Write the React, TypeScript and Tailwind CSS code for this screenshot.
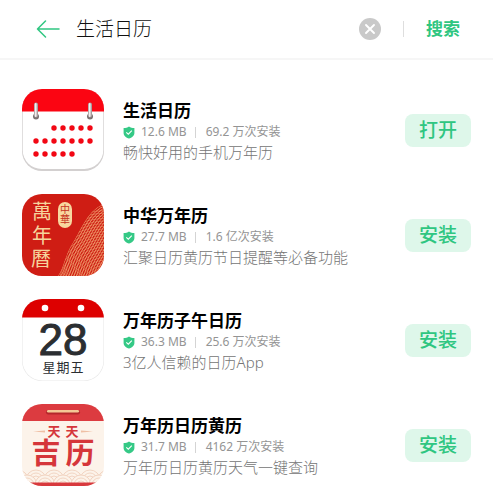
import { useState, type ReactNode } from "react";

interface AppItem {
  name: string;
  size: string;
  installs: string;
  description: string;
  action: string;
  icon: ReactNode;
}

function IconFrame({ id, children }: { id: string; children: ReactNode }) {
  return (
    <svg viewBox="0 0 82 82" className="size-[82px] shrink-0" aria-hidden="true">
      <defs>
        <clipPath id={id}>
          <rect width="82" height="82" rx="20" />
        </clipPath>
      </defs>
      <g clipPath={`url(#${id})`}>{children}</g>
    </svg>
  );
}

const dotRows = [
  { y: 39, xs: [32, 41, 50, 59, 68] },
  { y: 52, xs: [14, 23, 32, 41, 50, 59, 68] },
  { y: 65, xs: [14, 23, 32, 41, 50] },
];

function DotCalendarIcon() {
  return (
    <IconFrame id="clip-dots">
      <rect width="82" height="82" fill="#d3d0d0" />
      <rect x="0.7" y="0" width="80.6" height="80" rx="19" fill="#fff" />
      <rect width="82" height="22.5" fill="#fb0512" />
      {dotRows.map((row) =>
        row.xs.map((x) => <circle key={`${x}-${row.y}`} cx={x} cy={row.y} r="2.7" fill="#f20714" />)
      )}
      {[14, 68].map((x) => (
        <g key={x}>
          <circle cx={x} cy="27.5" r="3" fill="#7b7272" />
          <rect x={x - 2} y="13.5" width="4" height="15" rx="2" fill="#a79c9c" />
          <rect x={x - 1.2} y="14" width="1.8" height="14" rx="0.9" fill="#f3efef" />
        </g>
      ))}
    </IconFrame>
  );
}

function ChineseAlmanacIcon() {
  return (
    <IconFrame id="clip-almanac">
      <defs>
        <clipPath id="clip-hill">
          <path d="M36 82C42 74 43 60 52 47C60 34 66 16 82 10V82Z" />
        </clipPath>
      </defs>
      <rect width="82" height="82" fill="#cf1d14" />
      <g clipPath="url(#clip-hill)" fill="none" stroke="#efa06e" strokeWidth="0.9">
        {Array.from({ length: 26 }, (_, i) => (
          <path
            key={i}
            d="M30 94L36 82C42 74 43 60 52 47C60 34 66 16 82 10"
            transform={`translate(${i * 2} ${i * 1.2})`}
          />
        ))}
        {Array.from({ length: 30 }, (_, i) => (
          <circle key={i} cx="84" cy="96" r={4 + i * 2.6} strokeOpacity="0.6" />
        ))}
      </g>
      <g fill="#f6d49c" fontSize="20" textAnchor="middle">
        <text x="20" y="25">萬</text>
        <text x="20" y="49">年</text>
        <text x="19" y="72">曆</text>
      </g>
      <rect x="36" y="8" width="14" height="26" rx="7" fill="#f8d79f" />
      <g fill="#c6341f" fontSize="10" textAnchor="middle">
        <text x="43" y="19">中</text>
        <text x="43" y="29">華</text>
      </g>
    </IconFrame>
  );
}

function DateCalendarIcon() {
  return (
    <IconFrame id="clip-date">
      <rect width="82" height="82" fill="#e9e9e9" />
      <rect x="0.6" y="0" width="80.8" height="81.4" rx="19.5" fill="#fff" />
      <rect width="82" height="18.5" fill="#dd0000" />
      <circle cx="23" cy="9" r="3.3" fill="#fff" />
      <circle cx="59" cy="9" r="3.3" fill="#fff" />
      <text
        x="41"
        y="56"
        textAnchor="middle"
        fontSize="44"
        fontFamily="Liberation Sans, sans-serif"
        fill="#2b2e31"
        stroke="#2b2e31"
        strokeWidth="1"
      >
        28
      </text>
      <g fill="#2b2e31" fontSize="13" textAnchor="middle">
        <text x="27" y="73">星</text>
        <text x="41" y="73">期</text>
        <text x="55" y="73">五</text>
      </g>
    </IconFrame>
  );
}

function LuckyCalendarIcon() {
  return (
    <IconFrame id="clip-lucky">
      <rect width="82" height="82" fill="#fcf3ea" />
      <g fill="#fcf3ea" stroke="#efcdb9" strokeWidth="0.8">
        {[0, 1].map((row) =>
          Array.from({ length: 6 }, (_, i) => (
            <g key={`${row}-${i}`}>
              {[10, 7, 4].map((r) => (
                <circle key={r} cx={i * 18 - 4 + row * 9} cy={76 + row * 5} r={r} />
              ))}
            </g>
          ))
        )}
      </g>
      <rect width="82" height="17" fill="#dc3b40" />
      <rect y="78.5" width="82" height="4" fill="#d8393d" />
      <rect x="24" y="6" width="34" height="4.5" rx="2.2" fill="#b5262b" />
      <rect x="25" y="6" width="32" height="2.6" rx="1.3" fill="#f4c795" />
      <path d="M11 27.5L23 26.5V28.5ZM71 27.5L59 26.5V28.5Z" fill="#efc0a5" />
      <g fill="#d5363a" textAnchor="middle" fontWeight="700">
        <text x="32" y="32" fontSize="13">天</text>
        <text x="50" y="32" fontSize="13">天</text>
        <text x="24" y="60" fontSize="29">吉</text>
        <text x="58" y="60" fontSize="29">历</text>
      </g>
    </IconFrame>
  );
}

function ShieldCheck() {
  return (
    <svg viewBox="0 0 12 13" className="h-[13px] w-3 shrink-0" aria-hidden="true">
      <path
        d="M6 0.4C7.5 1.4 9.4 1.9 11.4 2V7C11.4 9.9 8.8 11.6 6 12.6C3.2 11.6 0.6 9.9 0.6 7V2C2.6 1.9 4.5 1.4 6 0.4Z"
        fill="#35c986"
      />
      <path d="M3.3 6.3L5.3 8.2L8.8 4.7" fill="none" stroke="#fff" strokeWidth="1.1" />
    </svg>
  );
}

const apps: AppItem[] = [
  {
    name: "生活日历",
    size: "12.6 MB",
    installs: "69.2 万次安装",
    description: "畅快好用的手机万年历",
    action: "打开",
    icon: <DotCalendarIcon />,
  },
  {
    name: "中华万年历",
    size: "27.7 MB",
    installs: "1.6 亿次安装",
    description: "汇聚日历黄历节日提醒等必备功能",
    action: "安装",
    icon: <ChineseAlmanacIcon />,
  },
  {
    name: "万年历子午日历",
    size: "36.3 MB",
    installs: "25.6 万次安装",
    description: "3亿人信赖的日历App",
    action: "安装",
    icon: <DateCalendarIcon />,
  },
  {
    name: "万年历日历黄历",
    size: "31.7 MB",
    installs: "4162 万次安装",
    description: "万年历日历黄历天气一键查询",
    action: "安装",
    icon: <LuckyCalendarIcon />,
  },
];

function AppRow({ app }: { app: AppItem }) {
  return (
    <li className="flex items-center">
      {app.icon}
      <div className="ml-[19px] min-w-0 flex-1 pt-0.5">
        <h2 className="truncate text-[17px] leading-6 font-bold text-black">{app.name}</h2>
        <p className="flex items-center text-[12px] leading-[18px] text-[#949494]">
          <ShieldCheck />
          <span className="ml-1.5">{app.size}</span>
          <span className="mr-2.5 ml-2 h-[11px] w-px bg-[#d4d4d4]" />
          <span>{app.installs}</span>
        </p>
        <p className="truncate text-[15px] leading-[22px] font-light text-[#757575]">{app.description}</p>
      </div>
      <button
        type="button"
        className="h-[33px] w-[66px] shrink-0 rounded-lg bg-[#def7ea] text-[19px] leading-6 font-medium text-[#2fc681]"
      >
        {app.action}
      </button>
    </li>
  );
}

export default function App() {
  const [query, setQuery] = useState("生活日历");

  return (
    <div className="min-h-screen bg-white font-['Noto_Sans','Noto_Sans_CJK_SC',sans-serif]">
      <header className="flex h-[60px] items-center border-b-2 border-[#f6f6f6] pr-[33px] pl-9">
        <button type="button" aria-label="返回" className="shrink-0">
          <svg viewBox="0 0 24 18" className="h-[18px] w-6" fill="none" stroke="#2fc681" strokeWidth="1.5">
            <path d="M9.5 1L1.5 9L9.5 17M1.5 9H23" strokeLinecap="round" strokeLinejoin="round" />
          </svg>
        </button>
        <input
          type="text"
          aria-label="搜索应用"
          value={query}
          onChange={(e) => setQuery(e.target.value)}
          className="ml-4 min-w-0 flex-1 text-[19px] leading-7 font-light text-[#111] outline-none"
        />
        <button type="button" aria-label="清除" onClick={() => setQuery("")} className="shrink-0">
          <svg viewBox="0 0 22 22" className="size-[22px]">
            <circle cx="11" cy="11" r="11" fill="#c9c9c9" />
            <path d="M7 7L15 15M15 7L7 15" stroke="#fff" strokeWidth="1.9" strokeLinecap="round" />
          </svg>
        </button>
        <span className="mx-[22px] h-4 w-px bg-[#dedede]" />
        <button type="button" className="shrink-0 text-[17px] leading-6 font-bold text-[#2fc681]">
          搜索
        </button>
      </header>
      <main className="px-[22px] pt-[29px]">
        <ul className="flex flex-col gap-[23px]">
          {apps.map((app) => (
            <AppRow key={app.name} app={app} />
          ))}
        </ul>
      </main>
    </div>
  );
}
